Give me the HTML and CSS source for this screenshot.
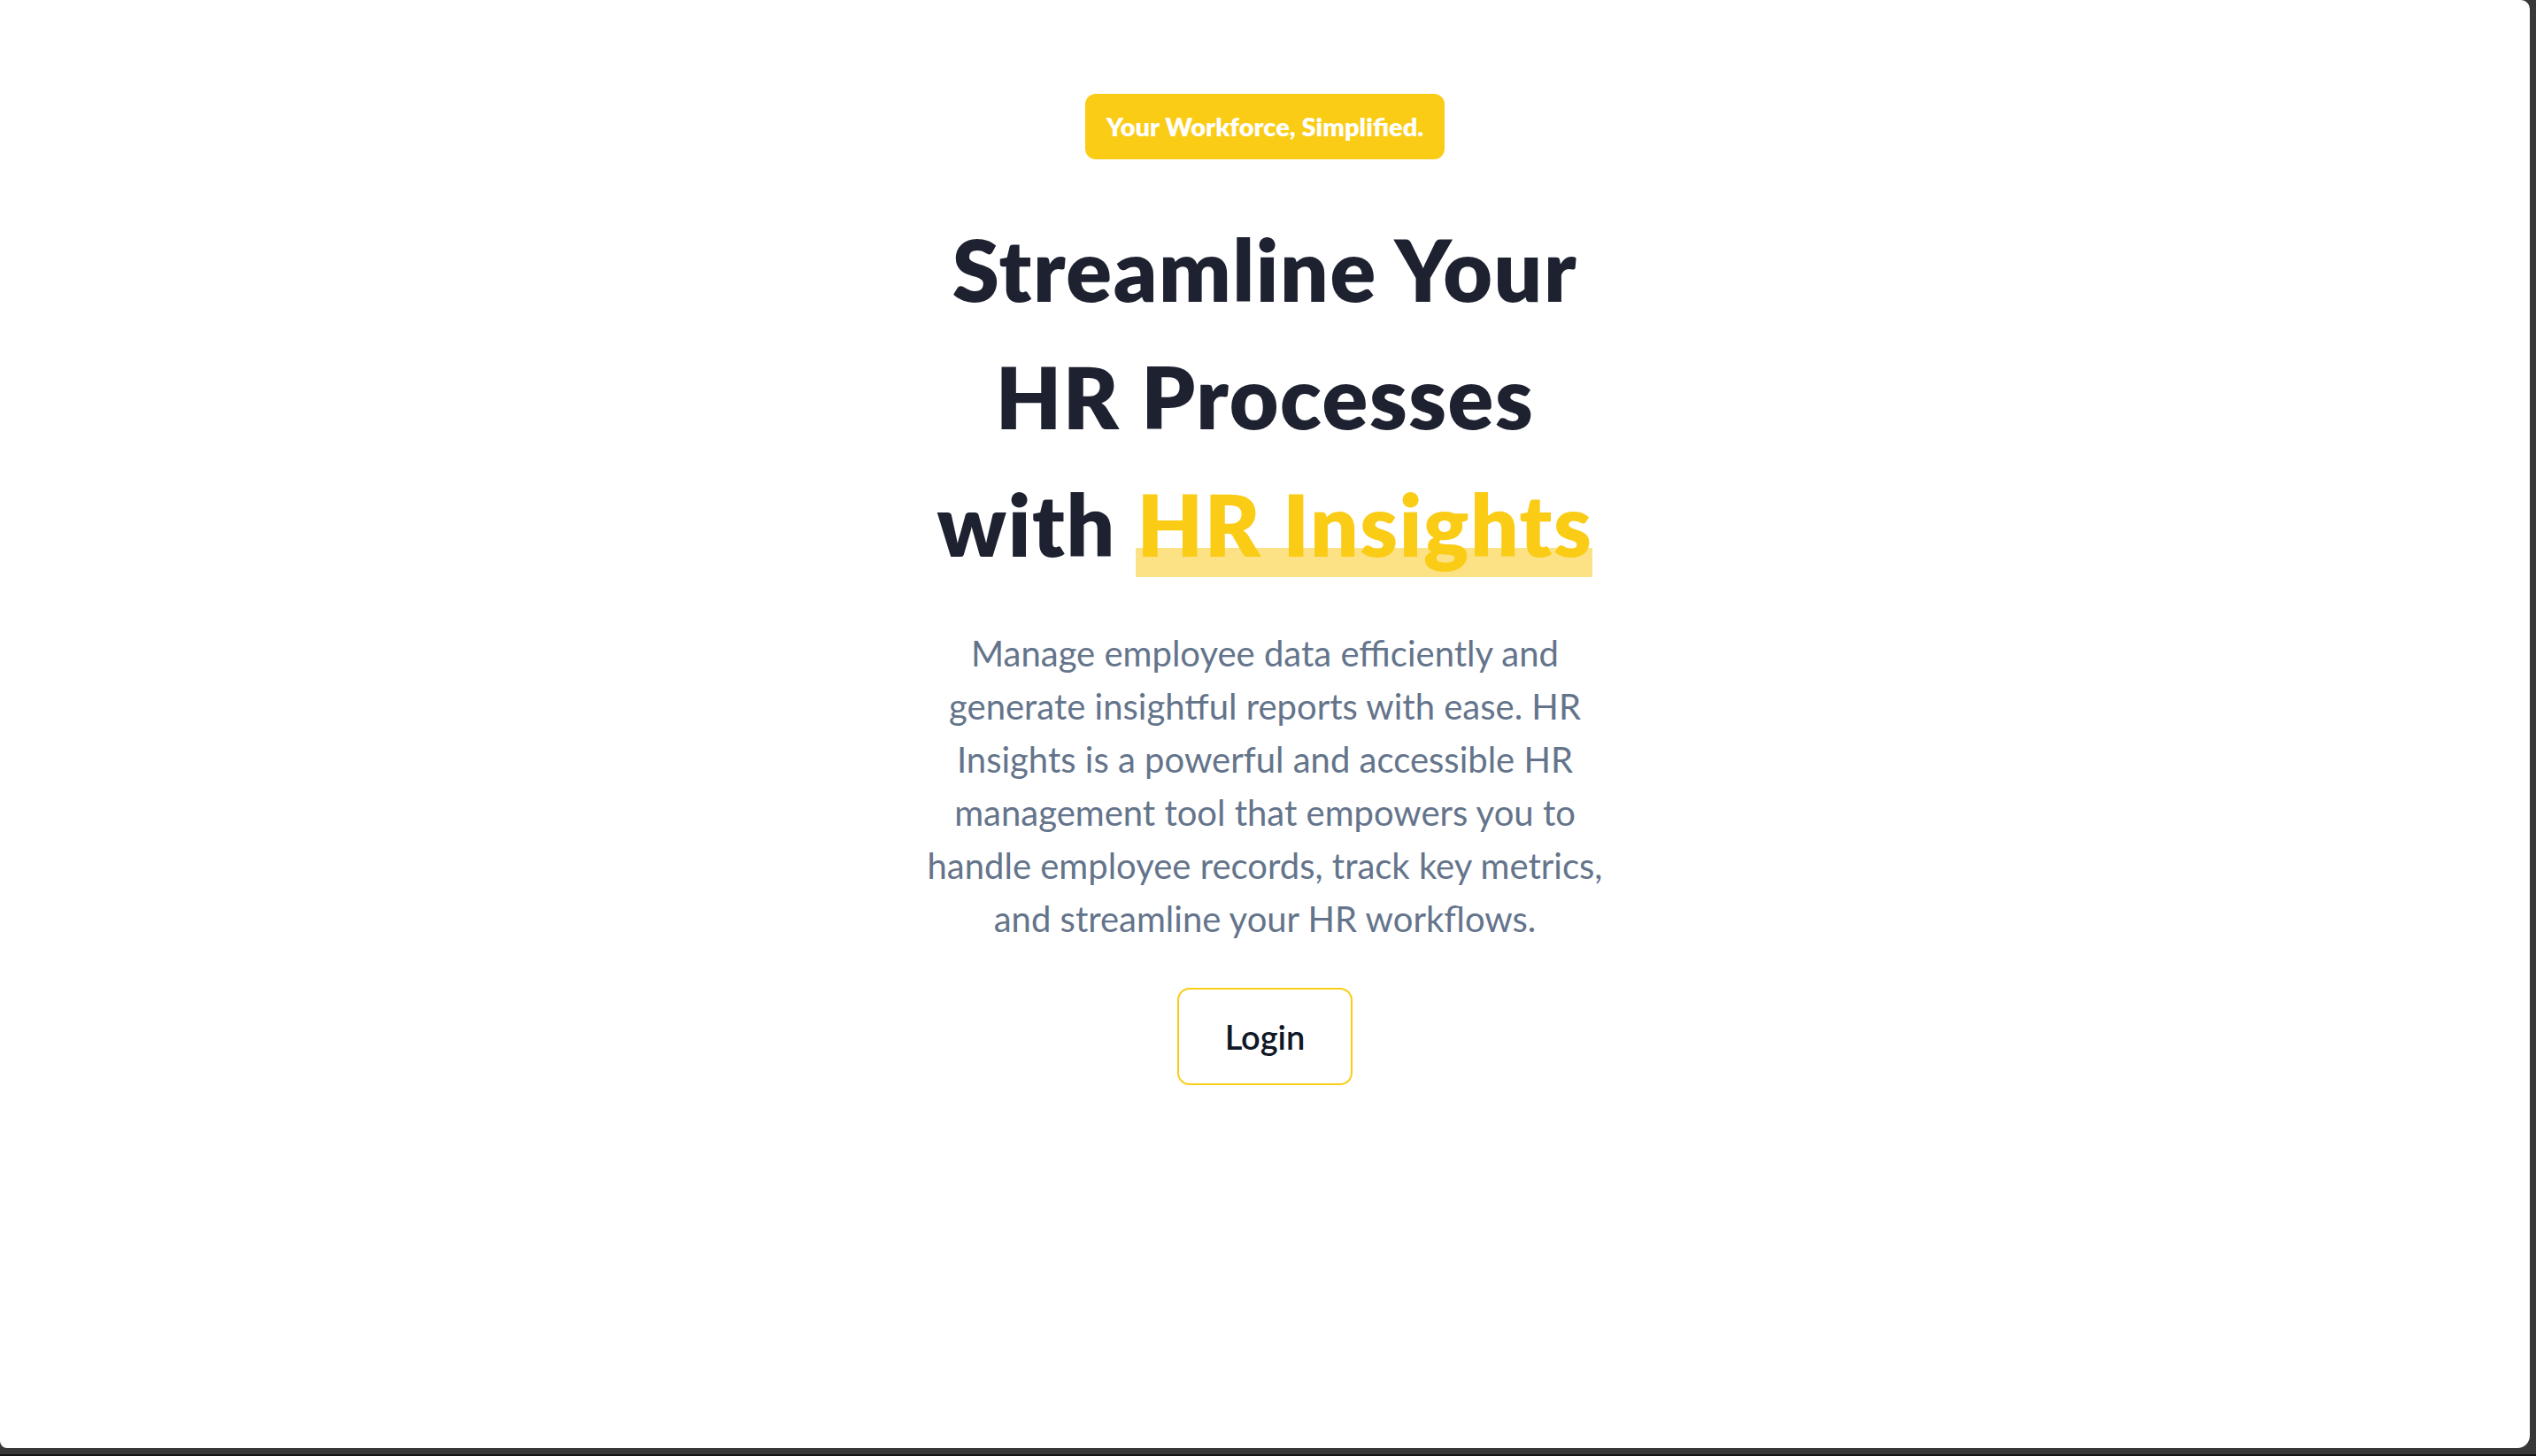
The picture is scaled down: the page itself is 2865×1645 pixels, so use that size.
FILE: index.html
```html
<!DOCTYPE html>
<html lang="en">
<head>
<meta charset="utf-8">
<title>HR Insights</title>
<link rel="stylesheet" href="styles.css">
</head>
<body>
  <div class="window">
    <main class="hero">
      <span class="badge">Your Workforce, Simplified.</span>
      <h1 class="title">Streamline Your HR Processes with <span class="accent">HR Insights</span></h1>
      <p class="lead">Manage employee data efficiently and generate insightful reports with ease. HR Insights is a powerful and accessible HR management tool that empowers you to handle employee records, track key metrics, and streamline your HR workflows.</p>
      <a class="login" href="#">Login</a>
    </main>
  </div>
</body>
</html>
```

FILE: styles.css
```css
html {
  background: #383838;
}
body {
  margin: 0;
  height: 1645px;
  box-sizing: border-box;
  border-bottom: 2px solid #151515;
  font-family: "Lato", "Liberation Sans", sans-serif;
  overflow: hidden;
}
.window {
  width: 2858px;
  height: 1636px;
  background: #ffffff;
  border-radius: 0 10px 14px 8px;
  box-sizing: border-box;
  padding-top: 106px;
}
.hero {
  display: flex;
  flex-direction: column;
  align-items: center;
  text-align: center;
}
.badge {
  display: inline-block;
  background: #facc15;
  color: #ffffff;
  font-weight: 800;
  font-size: 29px;
  line-height: 42px;
  padding: 16px 24px;
  border-radius: 12px;
}
.title {
  margin: 52px 0 0;
  width: 780px;
  font-size: 96px;
  line-height: 144px;
  font-weight: 800;
  letter-spacing: 1.6px;
  color: #1e2130;
}
.accent {
  position: relative;
  z-index: 0;
  color: #facc15;
}
.accent::after {
  content: "";
  position: absolute;
  left: -2px;
  right: 0;
  bottom: -3px;
  height: 33px;
  background: #fce285;
  z-index: -1;
}
.lead {
  margin: 44px 0 0;
  width: 790px;
  font-size: 40px;
  line-height: 60px;
  color: #64748b;
}
.login {
  margin-top: 48px;
  display: inline-block;
  padding: 23px 52px;
  border: 2px solid #facc15;
  border-radius: 14px;
  font-size: 38px;
  line-height: 60px;
  font-weight: 600;
  color: #111827;
  text-decoration: none;
}
```
